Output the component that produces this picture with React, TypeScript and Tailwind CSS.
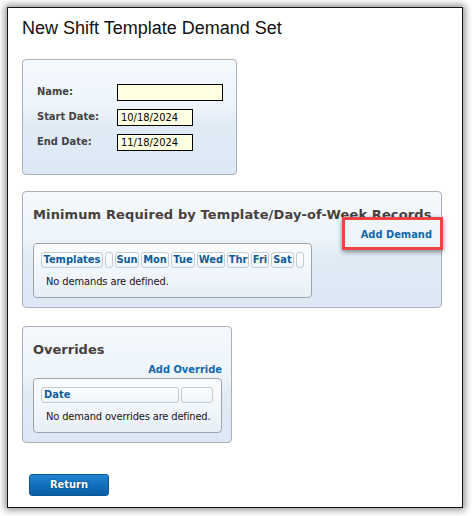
import React from "react";

const tahoma = "font-['DejaVu_Sans_Condensed','Liberation_Sans',sans-serif]";
const heading = "font-['DejaVu_Sans','Liberation_Sans',sans-serif]";
const panelBg =
  "bg-[linear-gradient(to_bottom,#f4f9fd_0%,#edf4fa_42%,#e0ebf6_58%,#dce8f4_100%)]";
const innerBg =
  "bg-[linear-gradient(to_bottom,#fafcfe_0%,#f2f7fb_50%,#e6eff7_100%)]";

function HeadCell({ w, children }: { w: string; children?: React.ReactNode }) {
  return (
    <div
      className={`${w} h-[16px] rounded-[3px] border border-[#c3cbd3] bg-[linear-gradient(to_bottom,#ffffff,#eef4f9)] text-[11px] font-bold leading-[14px] text-[#0c5d9c] flex items-center justify-center`}
    >
      {children}
    </div>
  );
}

export default function App() {
  return (
    <div className={`w-[472px] h-[516px] bg-white p-[7px] ${tahoma}`}>
      <div className="relative w-[456px] h-[501px] border border-[#161616] bg-white shadow-[0_0_7px_2px_rgba(0,0,0,0.45)] pl-[14px] pt-[10px]">
        <div className="h-[20px] leading-[20px] text-[18px] text-[#111] font-['Liberation_Sans',Arial,sans-serif]">
          New Shift Template Demand Set
        </div>

        {/* Panel 1 */}
        <div
          className={`mt-[21px] w-[215px] h-[116px] rounded-[4px] border border-[#a9b0b8] ${panelBg} pl-[14px] pt-[24px]`}
        >
          <div className="grid grid-cols-[80px_auto] gap-y-[8px] items-center">
            <div className="text-[11px] font-bold text-[#444]">Name:</div>
            <div className="w-[106px] h-[17px] border border-black bg-[#ffffe1]" />
            <div className="text-[11px] font-bold text-[#444]">Start Date:</div>
            <div className="w-[76px] h-[17px] border border-black bg-[#ffffe1] text-[11px] leading-[15px] text-black pl-[3px]">
              10/18/2024
            </div>
            <div className="text-[11px] font-bold text-[#444]">End Date:</div>
            <div className="w-[76px] h-[17px] border border-black bg-[#ffffe1] text-[11px] leading-[15px] text-black pl-[3px]">
              11/18/2024
            </div>
          </div>
        </div>

        {/* Panel 2 */}
        <div
          className={`mt-[16px] w-[420px] h-[117px] rounded-[4px] border border-[#a9b0b8] ${panelBg} pl-[10px] pr-[9px] pt-[15px]`}
        >
          <div className={`h-[16px] leading-[16px] text-[13px] font-bold text-[#483f3f] whitespace-nowrap tracking-[0.12px] ${heading}`}>
            Minimum Required by Template/Day-of-Week Records
          </div>
          <div className="mt-[4px] h-[16px] leading-[16px] text-right text-[11px] font-bold text-[#1168b0]">
            Add Demand
          </div>
          <div
            className={`w-[279px] h-[55px] rounded-[4px] border border-[#9ea4aa] ${innerBg} pl-[7px] pt-[8px]`}
          >
            <div className="flex gap-[2px]">
              <HeadCell w="w-[62px]">Templates</HeadCell>
              <HeadCell w="w-[8px]" />
              <HeadCell w="w-[24px]">Sun</HeadCell>
              <HeadCell w="w-[28px]">Mon</HeadCell>
              <HeadCell w="w-[24px]">Tue</HeadCell>
              <HeadCell w="w-[28px]">Wed</HeadCell>
              <HeadCell w="w-[22px]">Thr</HeadCell>
              <HeadCell w="w-[18px]">Fri</HeadCell>
              <HeadCell w="w-[23px]">Sat</HeadCell>
              <HeadCell w="w-[8px]" />
            </div>
            <div className="mt-[7px] pl-[5px] h-[14px] leading-[14px] text-[11px] text-[#1c0f22] whitespace-nowrap tracking-[-0.1px]">
              No demands are defined.
            </div>
          </div>
        </div>

        {/* Panel 3 */}
        <div
          className={`mt-[18px] w-[210px] h-[117px] rounded-[4px] border border-[#a9b0b8] ${panelBg} pl-[10px] pr-[9px] pt-[15px]`}
        >
          <div className={`h-[16px] leading-[16px] text-[13px] font-bold text-[#483f3f] ${heading}`}>
            Overrides
          </div>
          <div className="mt-[4px] h-[16px] leading-[16px] text-right text-[11px] font-bold text-[#1168b0]">
            Add Override
          </div>
          <div
            className={`h-[55px] rounded-[4px] border border-[#9ea4aa] ${innerBg} pl-[7px] pr-[8px] pt-[8px]`}
          >
            <div className="flex gap-[2px]">
              <div className="flex-1 h-[16px] rounded-[3px] border border-[#c3cbd3] bg-[linear-gradient(to_bottom,#ffffff,#eef4f9)] text-[11px] font-bold leading-[14px] text-[#0c5d9c] pl-[2px]">
                Date
              </div>
              <div className="w-[32px] h-[16px] rounded-[3px] border border-[#c3cbd3] bg-[linear-gradient(to_bottom,#ffffff,#eef4f9)]" />
            </div>
            <div className="mt-[7px] pl-[5px] h-[14px] leading-[14px] text-[11px] text-[#1c0f22] whitespace-nowrap tracking-[-0.15px]">
              No demand overrides are defined.
            </div>
          </div>
        </div>

        {/* Return button */}
        <button className="mt-[31px] ml-[7px] w-[80px] h-[22px] rounded-[3px] border border-[#0b5796] bg-[linear-gradient(to_bottom,#2284d2_0%,#1070bd_50%,#0a5ea3_100%)] text-white text-[11px] font-bold [text-shadow:0_0_2px_rgba(0,0,0,0.6)] flex items-center justify-center">
          Return
        </button>

        {/* Annotation highlight */}
        <div className="absolute left-[334px] top-[209px] w-[101px] h-[33px] border-[3px] border-[#ef4343] shadow-[0_2px_5px_rgba(0,0,0,0.45)]" />
      </div>
    </div>
  );
}
